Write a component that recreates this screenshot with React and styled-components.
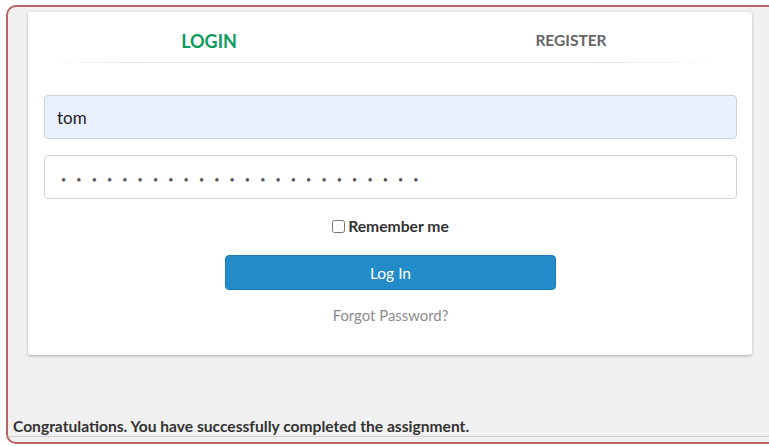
import React, { useState } from "react";
import styled, { createGlobalStyle } from "styled-components";

const GlobalStyle = createGlobalStyle`
  html, body {
    margin: 0;
    padding: 0;
    background: #fff;
    overflow: hidden;
  }
  body {
    font-family: "Lato", "Liberation Sans", sans-serif;
    color: #333;
  }
`;

const Frame = styled.div`
  display: flex;
  flex-direction: column;
  box-sizing: border-box;
  width: 820px;
  height: 439px;
  margin: 5px 0 0 6px;
  padding: 5px 0 5px 0;
  border: 2px solid #b96466;
  border-radius: 10px;
  background: #f0f0f0;
`;

const Card = styled.div`
  box-sizing: border-box;
  width: 724px;
  height: 343px;
  margin-left: 20px;
  padding: 16px 15px 0 16px;
  background: #fff;
  border-radius: 3px;
  box-shadow: 0 1px 3px rgba(0, 0, 0, 0.28);
`;

const Tabs = styled.div`
  display: grid;
  grid-template-columns: 1fr 1fr;
  height: 35px;
  margin: 0 -15px 0 -16px;
  position: relative;

  &::after {
    content: "";
    position: absolute;
    left: 20px;
    right: 30px;
    bottom: 0;
    height: 1px;
    background: linear-gradient(to right, rgba(221, 221, 221, 0) 0%, #e3e3e3 15%, #e3e3e3 80%, rgba(221, 221, 221, 0) 100%);
  }
`;

const Tab = styled.div`
  text-align: center;
  font-weight: 700;
  font-size: ${(p) => (p.$active ? "18px" : "15.5px")};
  line-height: ${(p) => (p.$active ? "27px" : "25px")};
  color: ${(p) => (p.$active ? "#0b9b5d" : "#666")};
`;

const Form = styled.form`
  display: flex;
  flex-direction: column;
  align-items: center;
  padding-top: 32px;
`;

const Input = styled.input`
  box-sizing: border-box;
  width: 100%;
  height: 44px;
  margin-bottom: 16px;
  padding: 0 12px;
  border: 1px solid #d2d2d2;
  border-radius: 4px;
  background: ${(p) => (p.$filled ? "#e8f0fe" : "#fff")};
  font-family: "Lato", "Liberation Sans", sans-serif;
  font-size: 17px;
  color: #222;
  outline: none;
`;

const PasswordInput = styled(Input)`
  padding: 4px 0 0 16px;
  font-size: 9px;
  letter-spacing: 10.1px;
  color: #555;
`;

const RememberRow = styled.label`
  display: flex;
  align-items: center;
  gap: 3px;
  margin-top: 2px;
  font-size: 15.7px;
  font-weight: 700;
  color: #333;

  input {
    width: 13px;
    height: 13px;
    margin: 0;
  }
`;

const Button = styled.button`
  width: 331px;
  height: 35px;
  margin-top: 20px;
  border: 1px solid #1b7bb5;
  border-radius: 4px;
  background: #238bc7;
  color: #fff;
  font-family: "Lato", "Liberation Sans", sans-serif;
  font-size: 15.5px;
  cursor: pointer;
`;

const Forgot = styled.a`
  margin-top: 16px;
  font-size: 14.9px;
  color: #8a8a8a;
  text-decoration: none;
`;

const Message = styled.div`
  margin-top: auto;
  padding: 0 0 1px 5px;
  border-bottom: 1px solid #cfcfcf;
  font-size: 15.6px;
  font-weight: 700;
  color: #333;
`;

export default function App() {
  const [user, setUser] = useState("tom");
  const [pass, setPass] = useState("xxxxxxxxxxxxxxxxxxxxxxxx");

  return (
    <>
      <GlobalStyle />
      <Frame>
        <Card>
          <Tabs>
            <Tab $active>LOGIN</Tab>
            <Tab>REGISTER</Tab>
          </Tabs>
          <Form onSubmit={(e) => e.preventDefault()}>
            <Input $filled type="text" value={user} onChange={(e) => setUser(e.target.value)} />
            <PasswordInput type="password" value={pass} onChange={(e) => setPass(e.target.value)} />
            <RememberRow>
              <input type="checkbox" />
              Remember me
            </RememberRow>
            <Button type="submit">Log In</Button>
            <Forgot href="#">Forgot Password?</Forgot>
          </Form>
        </Card>
        <Message>Congratulations. You have successfully completed the assignment.</Message>
      </Frame>
    </>
  );
}
